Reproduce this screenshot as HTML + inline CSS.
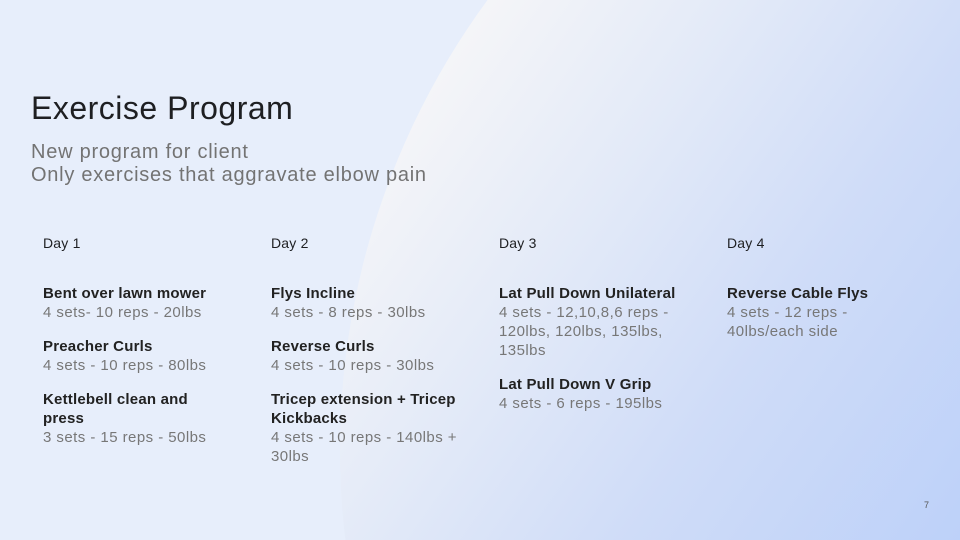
<!DOCTYPE html>
<html><head><meta charset="utf-8"><style>
html,body{margin:0;padding:0}
body{width:960px;height:540px;position:relative;overflow:hidden;background:#e7eefb;font-family:"Liberation Sans",sans-serif}
.circ{position:absolute;left:0;top:0;width:960px;height:540px;clip-path:circle(760px at 1100px 450px);
background:linear-gradient(125deg,#f6f6f8 35%,#e3eaf8 55%,#cfdcf8 75%,#bdd1f9 100%)}
.t{position:absolute;left:31px;top:90px;font-size:32px;color:#1e1f22;letter-spacing:0.5px}
.s{position:absolute;left:31px;top:141px;font-size:20px;line-height:23px;color:#737373;letter-spacing:0.75px}
.col{position:absolute;top:234px;width:190px}
.day{font-size:14px;color:#1e1f22;height:50px;line-height:18px;letter-spacing:0.2px}
.it{margin-bottom:15px;font-size:15px;line-height:19px;letter-spacing:0.45px}
.it b{display:block;color:#222;letter-spacing:0.2px}
.it span{color:#777}
.pg{position:absolute;left:924px;top:500px;font-size:9px;color:#555}
</style></head><body>
<div class="circ"></div>
<div class="t">Exercise Program</div>
<div class="s">New program for client<br>Only exercises that aggravate elbow pain</div>
<div class="col" style="left:43px"><div class="day">Day 1</div>
<div class="it"><b>Bent over lawn mower</b><span>4 sets- 10 reps - 20lbs</span></div>
<div class="it"><b>Preacher Curls</b><span>4 sets - 10 reps - 80lbs</span></div>
<div class="it"><b>Kettlebell clean and press</b><span>3 sets - 15 reps - 50lbs</span></div></div>
<div class="col" style="left:271px;width:195px"><div class="day">Day 2</div>
<div class="it"><b>Flys Incline</b><span>4 sets - 8 reps - 30lbs</span></div>
<div class="it"><b>Reverse Curls</b><span>4 sets - 10 reps - 30lbs</span></div>
<div class="it"><b>Tricep extension + Tricep Kickbacks</b><span>4 sets - 10 reps - 140lbs + 30lbs</span></div></div>
<div class="col" style="left:499px;width:185px"><div class="day">Day 3</div>
<div class="it"><b>Lat Pull Down Unilateral</b><span>4 sets - 12,10,8,6 reps - 120lbs, 120lbs, 135lbs, 135lbs</span></div>
<div class="it"><b>Lat Pull Down V Grip</b><span>4 sets - 6 reps - 195lbs</span></div></div>
<div class="col" style="left:727px;width:150px"><div class="day">Day 4</div>
<div class="it"><b>Reverse Cable Flys</b><span>4 sets - 12 reps - 40lbs/each side</span></div></div>
<div class="pg">7</div>
</body></html>
